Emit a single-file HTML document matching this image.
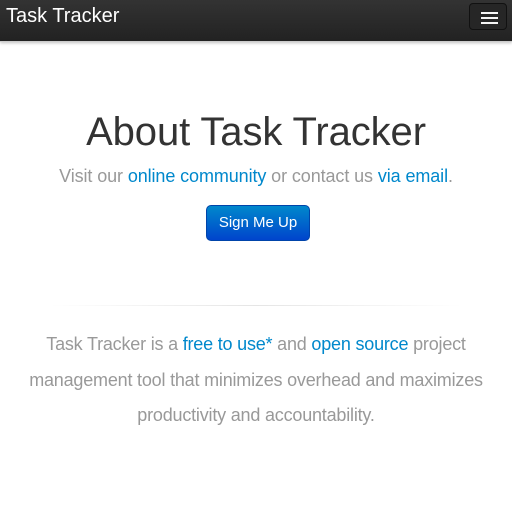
<!DOCTYPE html>
<html><head><style>
body{margin:0;background:#fff;font-family:"Liberation Sans",Arial,sans-serif;width:512px;height:512px;overflow:hidden}
.nav{height:41px;background:linear-gradient(#333,#222);border-bottom:1px solid #ccc;box-shadow:0 1px 3px rgba(0,0,0,.25);position:relative}
.brand{position:absolute;left:6px;top:5px;color:#fff;font-size:20px}
.tog{position:absolute;left:469px;top:3px;width:38px;height:27px;border:1px solid #111;border-radius:4px;background:#262626;box-sizing:border-box}
.tog i{position:absolute;left:11px;width:17px;height:2px;background:#f5f5f5}
h1{position:absolute;left:0;width:512px;text-align:center;top:110px;margin:0;font-weight:normal;font-size:40px;letter-spacing:-0.1px;color:#333}
.sub{position:absolute;left:0;width:512px;text-align:center;top:166px;font-size:18px;letter-spacing:-0.1px;color:#999}
a{color:#0088cc;text-decoration:none}
.btn{position:absolute;left:206px;top:205px;width:104px;height:36px;border-radius:5px;background:linear-gradient(#0088cc,#0044cc);border:1px solid #0044aa;box-sizing:border-box;color:#fff;font-size:15px;text-align:center;line-height:34px}
.hr{position:absolute;left:50px;width:412px;top:305px;height:1px;background:linear-gradient(90deg,rgba(0,0,0,0),#e5e5e5,rgba(0,0,0,0))}
.p{position:absolute;left:20px;width:472px;text-align:center;top:327px;font-size:18px;letter-spacing:-0.2px;line-height:35.5px;color:#999}
</style></head><body>
<div class="nav"><div class="brand">Task Tracker</div><div class="tog"><i style="top:8px"></i><i style="top:13px"></i><i style="top:18px"></i></div></div>
<h1>About Task Tracker</h1>
<div class="sub">Visit our <a>online community</a> or contact us <a>via email</a>.</div>
<div class="btn">Sign Me Up</div>
<div class="hr"></div>
<div class="p">Task Tracker is a <a>free to use*</a> and <a>open source</a> project management tool that minimizes overhead and maximizes productivity and accountability.</div>
</body></html>
